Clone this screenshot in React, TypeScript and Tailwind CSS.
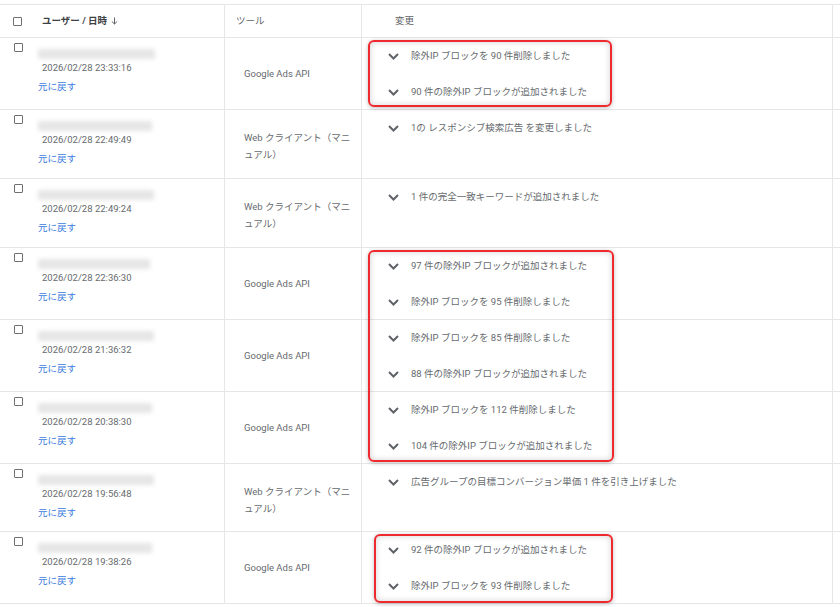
import React from "react";

type Row = {
  date: string;
  tool: "api" | "web";
  changes: string[];
  h: string;
  blur: string;
};

const rows: Row[] = [
  { date: "2026/02/28 23:33:16", tool: "api", h: "h-[72px]", blur: "w-[117px]", changes: ["除外IP ブロックを 90 件削除しました", "90 件の除外IP ブロックが追加されました"] },
  { date: "2026/02/28 22:49:49", tool: "web", h: "h-[69px]", blur: "w-[114px]", changes: ["1の レスポンシブ検索広告 を変更しました"] },
  { date: "2026/02/28 22:49:24", tool: "web", h: "h-[69px]", blur: "w-[116px]", changes: ["1 件の完全一致キーワードが追加されました"] },
  { date: "2026/02/28 22:36:30", tool: "api", h: "h-[72px]", blur: "w-[112px]", changes: ["97 件の除外IP ブロックが追加されました", "除外IP ブロックを 95 件削除しました"] },
  { date: "2026/02/28 21:36:32", tool: "api", h: "h-[72px]", blur: "w-[116px]", changes: ["除外IP ブロックを 85 件削除しました", "88 件の除外IP ブロックが追加されました"] },
  { date: "2026/02/28 20:38:30", tool: "api", h: "h-[72px]", blur: "w-[114px]", changes: ["除外IP ブロックを 112 件削除しました", "104 件の除外IP ブロックが追加されました"] },
  { date: "2026/02/28 19:56:48", tool: "web", h: "h-[68px]", blur: "w-[116px]", changes: ["広告グループの目標コンバージョン単価 1 件を引き上げました"] },
  { date: "2026/02/28 19:38:26", tool: "api", h: "h-[72px]", blur: "w-[114px]", changes: ["92 件の除外IP ブロックが追加されました", "除外IP ブロックを 93 件削除しました"] },
];

const Checkbox = () => (
  <div className="w-[9px] h-[9px] border-[1.5px] border-[#707070] rounded-[1px]" />
);

const Chevron = () => (
  <svg width="11" height="7" viewBox="0 0 11 7" className="shrink-0">
    <polyline points="1,1 5.5,5.5 10,1" fill="none" stroke="#5f6368" strokeWidth="2" />
  </svg>
);

// red annotation boxes drawn over the table
const Highlight = ({ cls }: { cls: string }) => (
  <div
    className={`absolute border-2 border-[#ee2a2f] rounded-[6px] shadow-[0_1px_4px_rgba(0,0,0,0.25),inset_0_0_6px_rgba(0,0,0,0.18)] ${cls}`}
  />
);

export default function App() {
  return (
    <div
      className="relative w-[840px] h-[607px] overflow-hidden bg-white text-[9.5px] text-[#666a6e]"
      style={{ fontFamily: "Roboto, 'Noto Sans CJK JP', sans-serif" }}
    >
      <div className="mt-[4px] border-t border-[#e6e6e6]">
        {/* header */}
        <div className="flex h-[33px] border-b border-[#e6e6e6] text-[#5f6368]">
          <div className="w-[225px] border-r border-[#e6e6e6] flex items-center">
            <div className="pl-[13px] pt-[1px]">
              <Checkbox />
            </div>
            <div className="ml-[20px] font-bold text-[#3c4043] flex items-center gap-[4px]">
              <span>ユーザー / 日時</span>
              <svg width="7" height="8" viewBox="0 0 7 8">
                <path d="M3.5 0.5 V7 M0.8 4.4 L3.5 7 L6.2 4.4" fill="none" stroke="#5f6368" strokeWidth="1" />
              </svg>
            </div>
          </div>
          <div className="w-[137px] border-r border-[#e6e6e6] flex items-center pl-[11px]">
            ツール
          </div>
          <div className="w-[471px] border-r border-[#e6e6e6] flex items-center pl-[33px]">
            変更
          </div>
        </div>

        {rows.map((r, i) => (
          <div key={i} className={`flex border-b border-[#e6e6e6] ${r.h}`}>
            <div className="w-[225px] border-r border-[#e6e6e6] flex">
              <div className="pl-[14px] pt-[5px]">
                <Checkbox />
              </div>
              <div className="ml-[15px] pt-[11px]">
                <div className={`h-[10px] bg-[#e6e6e6] blur-[2px] ${r.blur}`} />
                <div className="ml-[4px] mt-[1px] leading-[16px]">{r.date}</div>
                <div className="mt-[3px] leading-[16px] text-[#3b7be0]">元に戻す</div>
              </div>
            </div>
            <div className="w-[137px] border-r border-[#e6e6e6] flex items-center pl-[19px] leading-[17px]">
              {r.tool === "api" ? (
                <span>Google Ads API</span>
              ) : (
                <span className="pt-[4px]">
                  Web クライアント（マニ
                  <br />
                  ュアル）
                </span>
              )}
            </div>
            <div className="w-[471px] border-r border-[#e6e6e6] flex flex-col">
              {r.changes.map((c, j) => (
                <div key={j} className="h-[36px] flex items-center pl-[26px] gap-[12px] shrink-0">
                  <Chevron />
                  <span>{c}</span>
                </div>
              ))}
            </div>
          </div>
        ))}
      </div>

      <Highlight cls="left-[368px] top-[40px] w-[244px] h-[67px]" />
      <Highlight cls="left-[368px] top-[250px] w-[246px] h-[212px]" />
      <Highlight cls="left-[374px] top-[534px] w-[239px] h-[69px]" />
    </div>
  );
}
